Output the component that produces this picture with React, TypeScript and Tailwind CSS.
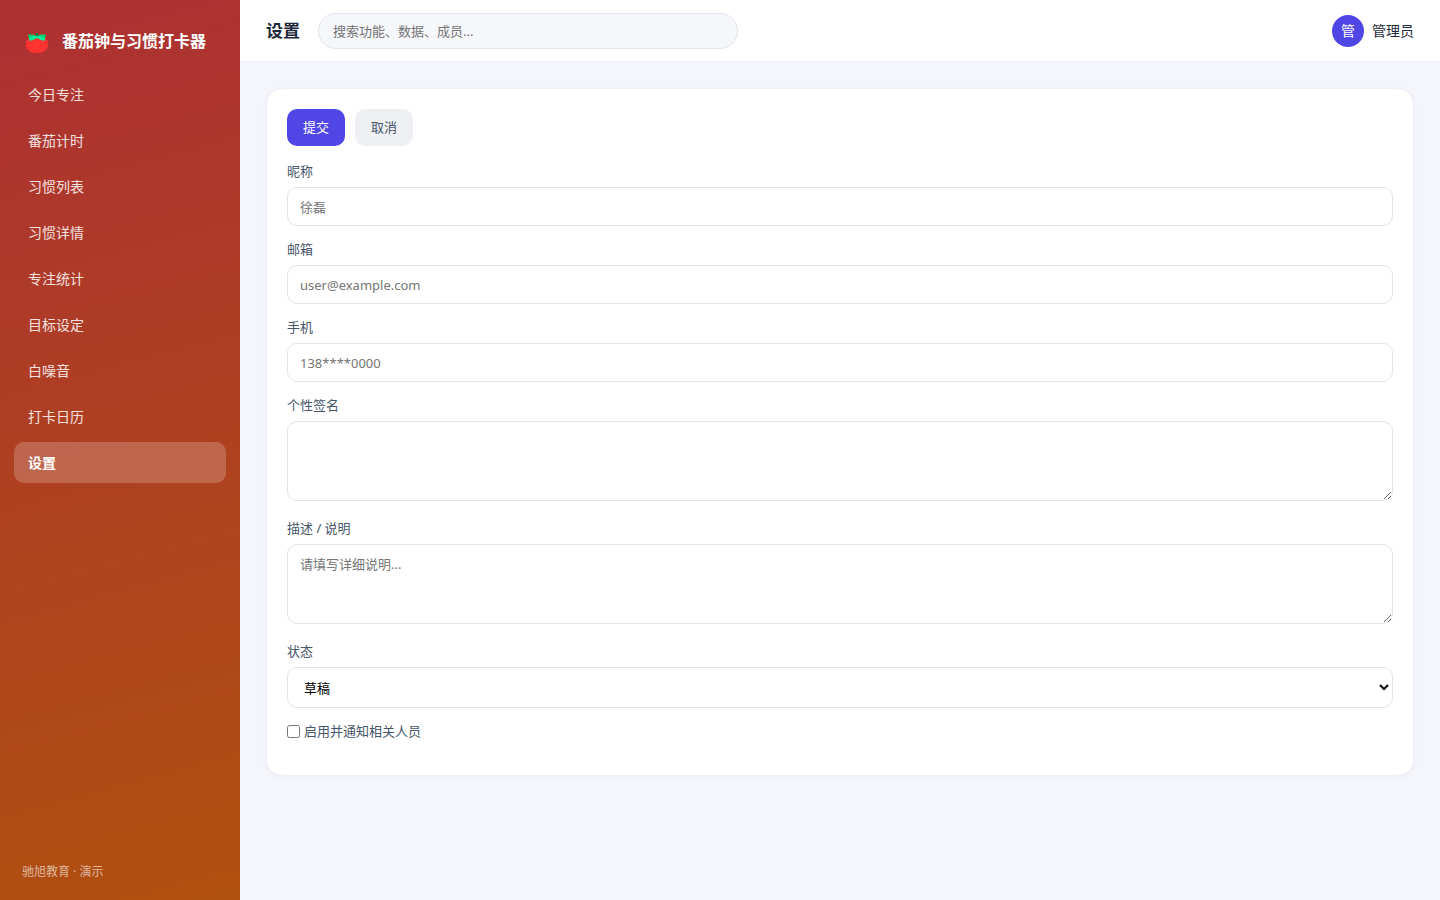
import type { ReactNode } from "react";

const navItems = [
  "今日专注",
  "番茄计时",
  "习惯列表",
  "习惯详情",
  "专注统计",
  "目标设定",
  "白噪音",
  "打卡日历",
  "设置",
];

const fieldClass =
  "block w-full rounded-[10px] border border-[#e2e4ed] bg-white px-3 text-[13px] text-black placeholder:text-[#757575]";

const TomatoIcon = () => (
  <svg width="22" height="20" viewBox="0 0 22 20" aria-hidden="true">
    <path
      d="M4 4C1.500 5.500 0 8 0 11.500c0 3.500 2 6 5 7.500 2 .8 4 1 6 1s4-.2 6-1c3-1.500 5-4 5-7.500 0-3.500-1.500-6-4-7.500z"
      fill="#ff3330"
    />
    <path
      d="M3 4l1.500-1.500L8 2.500h6l3.500 0L19 4v3.500h-3L13 6l-2-1-2 1-3 1.500H3z"
      fill="#00ee9a"
    />
    <path
      d="M2 1.500h5.500L9 3 6 3.200 3.500 5 2 3zM20 1.500h-5.500L13 3l3 .2L18.500 5 20 3z"
      fill="#0fc964"
    />
    <path d="M10 0h2v3h-2z" fill="#08783f" />
  </svg>
);

const Sidebar = () => {
  return (
    <aside className="flex w-60 shrink-0 flex-col bg-[linear-gradient(165deg,#ad3033_0%,#b0500f_100%)] px-3.5 pt-5 pb-4">
      <div className="mb-3 flex h-[42px] items-center gap-3.5 px-3">
        <span className="pt-1">
          <TomatoIcon />
        </span>
        <span className="text-base font-bold whitespace-nowrap text-white">
          番茄钟与习惯打卡器
        </span>
      </div>
      <nav className="flex flex-col gap-[5px]">
        {navItems.map((item) => (
          <a
            key={item}
            href="#"
            aria-current={item === "设置" ? "page" : undefined}
            className={
              item === "设置"
                ? "flex h-[41px] items-center rounded-[10px] bg-white/20 px-3.5 text-sm font-bold text-white"
                : "flex h-[41px] items-center rounded-[10px] px-3.5 text-sm text-white/85"
            }
          >
            {item}
          </a>
        ))}
      </nav>
      <p className="mt-auto px-2 text-xs leading-6 text-white/60">
        驰旭教育 · 演示
      </p>
    </aside>
  );
};

const Header = () => {
  return (
    <header className="flex h-[62px] items-center gap-[18px] border-b border-[#eceef3] bg-white px-[26px]">
      <h1 className="shrink-0 text-[17px] font-bold text-[#1e293b]">设置</h1>
      <input
        type="search"
        aria-label="搜索"
        placeholder="搜索功能、数据、成员..."
        className="h-9 w-full max-w-[420px] rounded-full border border-[#e2e4ed] bg-[#f6f7fb] px-3.5 text-[13px] placeholder:text-[#757575]"
      />
      <div className="ml-auto flex shrink-0 items-center gap-2 text-sm text-[#1e293b]">
        <span className="flex size-8 items-center justify-center rounded-full bg-[#4f46e5] text-sm text-white">
          管
        </span>
        <span>管理员</span>
      </div>
    </header>
  );
};

const Field = ({
  id,
  label,
  children,
}: {
  id: string;
  label: string;
  children: ReactNode;
}) => (
  <div className="flex flex-col gap-1.5">
    <label htmlFor={id} className="text-[13px] leading-[19px] text-[#475569]">
      {label}
    </label>
    {children}
  </div>
);

const App = () => {
  return (
    <div className="flex min-h-screen bg-[#f5f6fb] font-['Noto_Sans','Noto_Sans_CJK_SC',sans-serif]">
      <Sidebar />
      <div className="min-w-0 flex-1">
        <Header />
        <main className="p-[26px]">
          <form className="rounded-2xl border border-[#eff0f5] bg-white p-5 pb-[34px] shadow-[0_1px_4px_rgba(15,23,42,0.04)]">
            <div className="mb-4 flex gap-2.5 text-[13px]">
              <button
                type="button"
                className="h-[37px] rounded-[10px] bg-[#4f46e5] px-4 text-white"
              >
                提交
              </button>
              <button
                type="button"
                className="h-[37px] rounded-[10px] bg-[#eef0f4] px-4 text-[#475569]"
              >
                取消
              </button>
            </div>
            <div className="flex flex-col gap-3.5">
              <Field id="nickname" label="昵称">
                <input
                  id="nickname"
                  type="text"
                  placeholder="徐磊"
                  className={fieldClass + " h-[39px]"}
                />
              </Field>
              <Field id="email" label="邮箱">
                <input
                  id="email"
                  type="email"
                  placeholder="user@example.com"
                  className={fieldClass + " h-[39px]"}
                />
              </Field>
              <Field id="phone" label="手机">
                <input
                  id="phone"
                  type="tel"
                  placeholder="138****0000"
                  className={fieldClass + " h-[39px]"}
                />
              </Field>
              <Field id="signature" label="个性签名">
                <textarea
                  id="signature"
                  className={fieldClass + " mb-1 h-20 resize-y py-2.5"}
                />
              </Field>
              <Field id="description" label="描述 / 说明">
                <textarea
                  id="description"
                  placeholder="请填写详细说明..."
                  className={fieldClass + " mb-1 h-20 resize-y py-2.5"}
                />
              </Field>
              <Field id="status" label="状态">
                <select id="status" className={fieldClass + " h-[41px]"}>
                  <option>草稿</option>
                  <option>已发布</option>
                </select>
              </Field>
              <label className="flex items-center gap-1 text-[13px] leading-[19px] text-[#475569]">
                <input type="checkbox" className="size-[13px]" />
                启用并通知相关人员
              </label>
            </div>
          </form>
        </main>
      </div>
    </div>
  );
};

export default App;
